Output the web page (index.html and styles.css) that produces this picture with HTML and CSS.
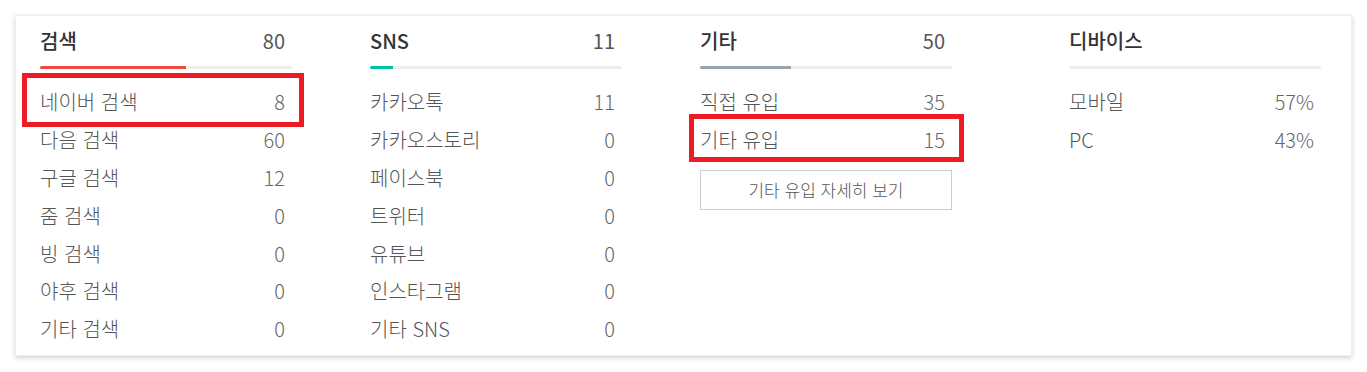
FILE: index.html
```html
<!DOCTYPE html>
<html lang="ko">
<head>
<meta charset="utf-8">
<link rel="stylesheet" href="styles.css">
</head>
<body>
<div class="card">
  <section class="col">
    <div class="head"><span class="title">검색</span><span class="total">80</span></div>
    <div class="track"><div class="fill red" style="width:58%"></div></div>
    <ul class="list">
      <li class="row"><span>네이버 검색</span><span class="num">8</span><i class="mark mark1"></i></li>
      <li class="row"><span>다음 검색</span><span class="num">60</span></li>
      <li class="row"><span>구글 검색</span><span class="num">12</span></li>
      <li class="row"><span>줌 검색</span><span class="num">0</span></li>
      <li class="row"><span>빙 검색</span><span class="num">0</span></li>
      <li class="row"><span>야후 검색</span><span class="num">0</span></li>
      <li class="row"><span>기타 검색</span><span class="num">0</span></li>
    </ul>
  </section>
  <section class="col">
    <div class="head"><span class="title">SNS</span><span class="total">11</span></div>
    <div class="track"><div class="fill teal" style="width:9%"></div></div>
    <ul class="list">
      <li class="row"><span>카카오톡</span><span class="num">11</span></li>
      <li class="row"><span>카카오스토리</span><span class="num">0</span></li>
      <li class="row"><span>페이스북</span><span class="num">0</span></li>
      <li class="row"><span>트위터</span><span class="num">0</span></li>
      <li class="row"><span>유튜브</span><span class="num">0</span></li>
      <li class="row"><span>인스타그램</span><span class="num">0</span></li>
      <li class="row"><span>기타 SNS</span><span class="num">0</span></li>
    </ul>
  </section>
  <section class="col">
    <div class="head"><span class="title">기타</span><span class="total">50</span></div>
    <div class="track"><div class="fill gray" style="width:36%"></div></div>
    <ul class="list">
      <li class="row"><span>직접 유입</span><span class="num">35</span></li>
      <li class="row"><span>기타 유입</span><span class="num">15</span><i class="mark mark2"></i></li>
    </ul>
    <button class="more">기타 유입 자세히 보기</button>
  </section>
  <section class="col last">
    <div class="head"><span class="title">디바이스</span></div>
    <div class="track"></div>
    <ul class="list">
      <li class="row"><span>모바일</span><span class="num">57%</span></li>
      <li class="row"><span>PC</span><span class="num">43%</span></li>
    </ul>
  </section>
</div>
</body>
</html>
```
FILE: styles.css
```css
* { box-sizing: border-box; }
html, body { margin: 0; padding: 0; background: #fff; }
body {
  font-family: "Noto Sans CJK KR", "Noto Sans", sans-serif;
  padding: 15px 15px 16px 15px;
}
.card {
  width: 1337px;
  height: 341px;
  background: #fff;
  border: 1px solid #f0f0f0;
  box-shadow: 0 2px 5px rgba(0,0,0,0.18);
  display: flex;
  gap: 78px;
  padding: 10px 0 0 24px;
}
.col { width: 252px; flex: none; }
.col.last { margin-left: 39px; }
.head {
  display: flex;
  justify-content: space-between;
  align-items: center;
  height: 28px;
  padding-right: 7px;
}
.title { font-size: 20px; font-weight: 500; color: #333; }
.total { font-size: 20px; font-weight: 400; color: #555; }
.track {
  margin-top: 12px;
  height: 3px;
  border-radius: 2px;
  background: #eeeeee;
  overflow: hidden;
}
.fill { height: 100%; }
.red { background: #f24a3d; }
.teal { background: #00c2a8; }
.gray { background: #9aa4ae; }
.list { list-style: none; margin: 14px 0 0 0; padding: 0; }
.row {
  position: relative;
  display: flex;
  justify-content: space-between;
  align-items: center;
  height: 37.8px;
  padding-right: 7px;
  font-size: 20px;
  font-weight: 300;
  color: #555;
}
.num { color: #666; }
.mark {
  position: absolute;
  border: 5px solid #ed1c24;
}
.mark1 { left: -18px; right: -12px; top: -10px; bottom: -6px; }
.mark2 { left: -11px; right: -12px; top: -7px; bottom: -3px; }
.more {
  display: block;
  width: 252px;
  height: 40px;
  margin-top: 11px;
  background: #fff;
  border: 1px solid #c5cdd9;
  font-family: inherit;
  font-size: 17px;
  font-weight: 300;
  color: #555;
  cursor: pointer;
}
```
